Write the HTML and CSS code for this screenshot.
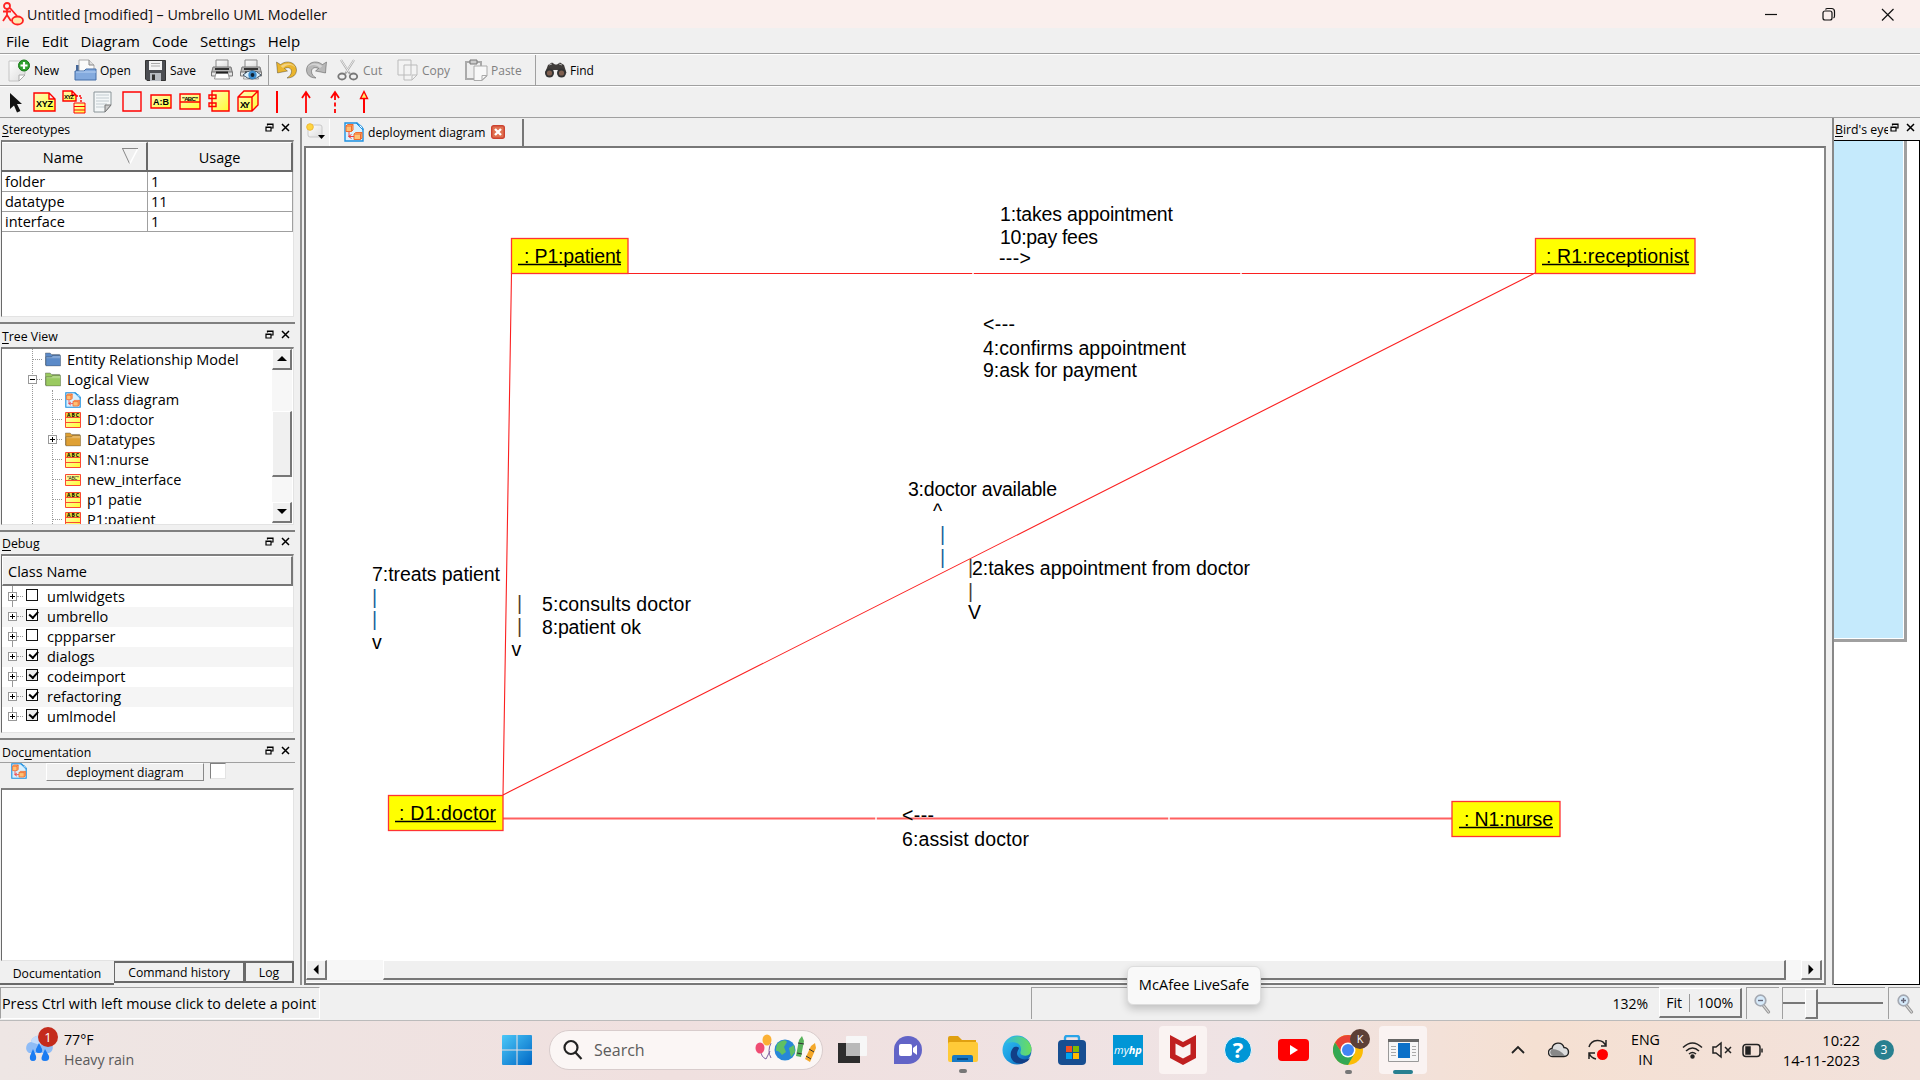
FILE: index.html
```html
<!DOCTYPE html>
<html lang="en">
<head>
<meta charset="utf-8">
<title>Untitled [modified] – Umbrello UML Modeller</title>
<link rel="stylesheet" href="styles.css">
</head>
<body>
<svg class="defs" width="0" height="0" aria-hidden="true">
  <defs>
    <linearGradient id="gy" x1="0" y1="0" x2="1" y2="1"><stop offset="0" stop-color="#fff9c0"/><stop offset="1" stop-color="#ffff30"/></linearGradient>
    <linearGradient id="gp" x1="0" y1="0" x2="1" y2="1"><stop offset="0" stop-color="#fff"/><stop offset="1" stop-color="#dcdcdc"/></linearGradient>
    <linearGradient id="gw" x1="0" y1="0" x2="1" y2="1"><stop offset="0" stop-color="#4cc8f8"/><stop offset="1" stop-color="#0067c5"/></linearGradient>
    <linearGradient id="ge" x1="0" y1="0" x2="1" y2="1"><stop offset="0" stop-color="#35c1f1"/><stop offset=".5" stop-color="#1b9de2"/><stop offset="1" stop-color="#0c4a9e"/></linearGradient>
    <linearGradient id="gg" x1="0" y1="0" x2="1" y2="0"><stop offset="0" stop-color="#2bb8e8"/><stop offset="1" stop-color="#6ade5b"/></linearGradient>
    <symbol id="diagram" viewBox="0 0 20 20">
      <path d="M1 1h12l6 6v12H1z" fill="#d8f0ff" stroke="#1e90e0" stroke-width="1.4"/>
      <path d="M12 1l7 7c0-3-2-5-4-5z" fill="#fff" stroke="#1e90e0"/>
      <path d="M2 4l1.500-1.500H9V8L7.500 9.500H2zM2 4h5.500v5.500M7.500 4L9 2.500M10 12l1.500-1.500H18V16l-1.500 1.500H10zM10 12h6.500v5.500M16.500 12l1.500-1.500" fill="#ffc074" stroke="#f06a30"/>
      <path d="M5 10v4.500h5M7.500 12.500l-3 2 3 2" fill="none" stroke="#f04040"/>
    </symbol>
    <symbol id="class" viewBox="0 0 16 16">
      <path d="M.5.500h15v15H.500z" fill="url(#gy)" stroke="#fa4a32"/>
      <path d="M1 1h14v4H1z" fill="#e6d73c"/><path d="M.500 5.500h15M.500 10.500h15" stroke="#fa4a32"/>
      <text x="8" y="4.700" font-size="5" textLength="12" font-weight="bold" text-anchor="middle">ABC</text>
    </symbol>
    <symbol id="folder" viewBox=".6 .8 16.800 15">
      <path d="M1 14V1.500h5l1.500 1.500H16V14z" fill="currentColor" stroke="#555" stroke-opacity=".45"/>
      <path d="M1.500 5.500H7L8.500 4H17v11H1.500z" fill="currentColor" stroke="#333" stroke-opacity=".35"/>
      <path d="M2 6h6l1-1.300h7.500V7H2z" fill="#fff" fill-opacity=".25"/>
    </symbol>
    <symbol id="float" viewBox="0 0 9 9"><path d="M2.500 2.500V1H8v4H6.500M2.500 1.500H8M1 4h5v4H1zM1 4.500h5" fill="none" stroke="#000" stroke-width="1.200"/></symbol>
    <symbol id="x" viewBox="0 0 9 9"><path d="M1 1l7 7M8 1L1 8" stroke="#000" stroke-width="1.500"/></symbol>
    <symbol id="printer" viewBox="0 0 22 22">
      <path d="M5 1h12v8H5z" fill="url(#gp)" stroke="#888"/><path d="M2 8h18l1.500 6H.500z" fill="#b8b8b8" stroke="#777"/>
      <path d="M.500 13h21v4H.500z" fill="#e4e4e4" stroke="#777"/><path d="M4 9h14v2H4z" fill="#333"/><path d="M5 14h12l1.500 6h-15z" fill="#fff" stroke="#999"/><path d="M5 13.500h12" stroke="#222" stroke-width="2"/>
    </symbol>
    <symbol id="undo" viewBox="0 0 22 20">
      <path d="M1 2l1 11 10-2-3-2.500c4-2 7 0 7 3 0 2.500-2 5-4.500 6.500C17 18 21 15 21 10 21 3 12-1 5 4.500z" fill="currentColor" stroke="#000" stroke-opacity=".3"/>
      <path d="M2 3.500l3 2.500C11 2 18 3 20 8 17 4 11 4 7.500 8z" fill="#fff" fill-opacity=".4"/>
    </symbol>
    <symbol id="lens" viewBox="0 0 18 20">
      <path d="M9 11l5.500 7" stroke="#999" stroke-width="3.200" stroke-linecap="round"/><path d="M9 11l5.500 7" stroke="#ddd" stroke-width="1.200" stroke-linecap="round"/>
      <circle cx="6.500" cy="6.500" r="5.300" fill="#d6eafa" stroke="#a4a9b2" stroke-width="1.700"/>
    </symbol>
  </defs>
</svg>
<div class="app">
  <header class="titlebar">
    <svg class="logo" width="22" height="24" viewBox="0 0 22 24" fill="none" stroke="#f22" stroke-width="1.800"><circle cx="5" cy="4" r="3"/><path d="M5 7v7M1 9.500h8M5 13l-4 6M5 13l4 6M8 6l7 8"/><ellipse cx="15.500" cy="18.500" rx="5.500" ry="4" fill="#ffe9b0"/></svg>
    <span class="title">Untitled [modified] – Umbrello UML Modeller</span>
    <svg class="winbtns" width="132" height="14" viewBox="0 0 132 14" fill="none" stroke="#111" stroke-width="1.200"><path d="M0 7.500h12"/><rect x="58" y="4" width="9" height="9" rx="2"/><path d="M60.500 2.500q.500-1 2-1h4q3 0 3 3v4.500q0 1.500-1 2"/><path d="M117 2l11.500 11.500M128.500 2L117 13.500"/></svg>
  </header>
  <nav class="menubar"><span>File</span><span>Edit</span><span>Diagram</span><span>Code</span><span>Settings</span><span>Help</span></nav>

  <div class="toolbar">
    <span class="tool t-new"><svg width="23" height="23" viewBox="0 0 23 23"><path d="M1 2h16v13l-6 7H1z" fill="url(#gp)" stroke="#c4c4c4"/><path d="M11 22v-6h6z" fill="#fff" stroke="#aaa"/><circle cx="16" cy="6.500" r="5.500" fill="#2ca02c" stroke="#187818"/><path d="M16 3v7M12.500 6.500h7" stroke="#fff" stroke-width="2.200"/></svg>New</span>
    <span class="tool t-open"><svg width="23" height="23" viewBox="0 0 23 23"><path d="M2 6h5v-4h9l4 4v12H2z" fill="#46689a"/><path d="M5 1h10l5 5v9H5z" fill="#fafafa" stroke="#aaa"/><path d="M15 1v5h5" fill="#ddd" stroke="#888"/><path d="M1 12h9l2-2h10v11H1z" fill="#83aade" stroke="#456fa8"/><path d="M2 13h20" stroke="#b8d2f4"/></svg>Open</span>
    <span class="tool t-save"><svg width="21" height="21" viewBox="0 0 21 21"><path d="M.500.500h20v20H2l-1.500-1.500z" fill="#4b4d52" stroke="#333"/><path d="M4 1h13v9H4z" fill="#f4f4f4"/><path d="M6 3.500h9M6 6h9" stroke="#aaa"/><path d="M5 13h11v8H5z" fill="#b8bcc2"/><path d="M7 14.500h3V20H7z" fill="#333"/></svg>Save</span>
    <svg class="t-print" width="22" height="22"><use href="#printer"/></svg>
    <svg class="t-preview" width="23" height="22" viewBox="0 0 23 22"><use href="#printer" width="22" height="22"/><path d="M3 16q9-9 18 0-9 8-18 0z" fill="#d8eefc" stroke="#456"/><circle cx="12.500" cy="16" r="4.200" fill="#3b8ccc"/><circle cx="12.500" cy="16" r="1.900" fill="#123"/></svg>
    <i class="sep"></i>
    <svg class="t-undo" width="23" height="20"><use href="#undo"/></svg>
    <svg class="t-redo" width="23" height="20"><use href="#undo"/></svg>
    <span class="tool off t-cut"><svg width="22" height="22" viewBox="0 0 22 22" fill="none" stroke="#999"><path d="M4 1l9 14M17 1L8 15" stroke="#aaa" stroke-width="2.200"/><path d="M4 1l8 12M17 1L9 13" stroke="#eee"/><ellipse cx="5" cy="17.500" rx="3.700" ry="3" stroke="#777" stroke-width="1.800"/><ellipse cx="16.500" cy="17.500" rx="3.700" ry="3" stroke="#777" stroke-width="1.800"/></svg>Cut</span>
    <span class="tool off t-copy"><svg width="21" height="22" viewBox="0 0 21 22" fill="#f3f3f3" stroke="#bbb"><path d="M1 1h13v15H1zM7 6h13v10l-5 5H7zM15 21v-5h5z"/></svg>Copy</span>
    <span class="tool off t-paste"><svg width="23" height="22" viewBox="0 0 23 22" fill="#eee" stroke="#aaa"><path d="M1 3h15v17H1z" stroke-width="2"/><path d="M5 1h7v4H5z" fill="#ccc" stroke="#777"/><path d="M9 7h13v10l-5 4.500H9zM17 21v-4.500h5z" fill="#f8f8f8"/></svg>Paste</span>
    <i class="sep s2"></i>
    <span class="tool t-find"><svg width="23" height="16" viewBox="0 0 23 16"><path d="M4 3l4-2.500 3 2h2l3-2L20 3l2.500 8-5 2-4-5h-4L6 13l-5-2z" fill="#403c3a"/><circle cx="5.500" cy="11" r="4.500" fill="#333"/><circle cx="17.500" cy="11" r="4.500" fill="#333"/><circle cx="5.500" cy="11" r="2.600" fill="#806050"/><circle cx="17.500" cy="11" r="2.600" fill="#806050"/><path d="M5 3l3-1M15 2l3 1" stroke="#aaa"/></svg>Find</span>
  </div>

  <div class="toolbar tools">
    <svg width="400" height="26" viewBox="0 0 400 26" fill="none" stroke="#f00" stroke-width="1.400">
      <path d="M10 4v16l4-3.500 3 7 3.500-1.500-3.500-7h5z" fill="#111" stroke="none"/>
      <path d="M34 4h15l6 6v12H34zM49 4v6h6" fill="url(#gy)"/><text class="ic" x="36" y="18" textLength="17">XYZ</text>
      <path d="M63 2h9l4 4v6H63zM72 2v4h4" fill="url(#gy)"/><text class="ic s" x="64" y="10" textLength="10">XYZ</text><path d="M76 7h5v6" stroke-dasharray="2 1"/><path d="M74 14h11v10H74zM74 17.500h11M74 21h11" fill="url(#gy)" stroke-width="1"/>
      <path d="M94 3h17v13l-6 7H94z" fill="#f4f7f8" stroke="#8a9498" stroke-width="1"/><path d="M96 6h13M96 9h13M96 12h13M96 15h11M96 18h9" stroke="#c2cbd0" stroke-width="1"/><path d="M105 23v-7h6z" fill="#ccc" stroke="#777" stroke-width="1"/>
      <path d="M123 3h18v19h-18z"/>
      <path d="M151 6h20v13h-20z" fill="url(#gy)"/><text class="ic" x="153" y="16" textLength="16">A:B</text>
      <path d="M180 5h20v15h-20zM180 13h20" fill="url(#gy)"/><text class="ic s" x="182" y="11.500" textLength="16">"ABC"</text>
      <path d="M212 2h17v20h-17zM209 6h7v3.500h-7zM209 14h7v3.500h-7z" fill="url(#gy)"/>
      <path d="M238 8l6-6h14v14l-6 6h-14zM238 8h14v14M252 8l6-6" fill="url(#gy)"/><text class="ic" x="240" y="19" textLength="10">XY</text>
      <path d="M277 2v22" stroke-width="2"/><path d="M306 24V3M302 9l4-6 4 6" stroke-width="1.800"/><path d="M335 24v-4m0-2.500v-4m0-2.500V3M331 9l4-6 4 6" stroke-width="1.800"/><path d="M364 24V9" stroke-width="2"/><path d="M360.500 9.500l3.500-7 3.500 7z" fill="#fff070"/>
    </svg>
  </div>

  <main class="workspace">
    <aside class="docks">
      <section class="dock stereo">
        <h2><span><u>S</u>tereotypes</span><b><svg width="9" height="9"><use href="#float"/></svg><svg width="9" height="9"><use href="#x"/></svg></b></h2>
        <div class="well">
          <div class="grid head"><span>Name<svg class="sort" width="16" height="16" viewBox="0 0 16 16" fill="none"><path d="M0 .500h16M.500.500l7 15" stroke="#888"/><path d="M15.500 1L8 15.500" stroke="#fff" stroke-width="1.500"/></svg></span><span>Usage</span></div>
          <div class="grid"><span>folder</span><span>1</span></div>
          <div class="grid"><span>datatype</span><span>11</span></div>
          <div class="grid"><span>interface</span><span>1</span></div>
        </div>
      </section>
      <section class="dock tree">
        <h2><span><u>T</u>ree View</span><b><svg width="9" height="9"><use href="#float"/></svg><svg width="9" height="9"><use href="#x"/></svg></b></h2>
        <div class="well split">
          <div class="nodes">
            <div class="node l1"><svg class="blue" width="16" height="15"><use href="#folder"/></svg>Entity Relationship Model</div>
            <div class="node l1"><i class="exp minus"></i><svg class="green" width="16" height="15"><use href="#folder"/></svg>Logical View</div>
            <div class="sub">
            <div class="node l2"><svg width="16" height="16"><use href="#diagram"/></svg>class diagram</div>
            <div class="node l2"><svg width="16" height="16"><use href="#class"/></svg>D1:doctor</div>
            <div class="node l2"><i class="exp"></i><svg class="gold" width="16" height="15"><use href="#folder"/></svg>Datatypes</div>
            <div class="node l2"><svg width="16" height="16"><use href="#class"/></svg>N1:nurse</div>
            <div class="node l2"><svg width="16" height="12" viewBox="0 0 16 12"><path d="M.500.500h15v11H.500zM.500 6.500h15" fill="url(#gy)" stroke="#fa4a32"/><text x="8" y="5.500" font-size="5" textLength="12" text-anchor="middle">"ABC"</text></svg>new_interface</div>
            <div class="node l2"><svg width="16" height="16"><use href="#class"/></svg>p1 patie</div>
            <div class="node l2"><svg width="16" height="16"><use href="#class"/></svg>P1:patient</div>
            </div>
          </div>
          <div class="vscroll"><i class="btn up"></i><i class="btn thumb"></i><i class="btn down"></i></div>
        </div>
      </section>
      <section class="dock debug">
        <h2><span><u>D</u>ebug</span><b><svg width="9" height="9"><use href="#float"/></svg><svg width="9" height="9"><use href="#x"/></svg></b></h2>
        <div class="well">
          <div class="classhead">Class Name</div>
          <div class="checks">
            <div><i class="exp"></i><i class="box"></i>umlwidgets</div>
            <div><i class="exp"></i><i class="box on"></i>umbrello</div>
            <div><i class="exp"></i><i class="box"></i>cppparser</div>
            <div><i class="exp"></i><i class="box on"></i>dialogs</div>
            <div><i class="exp"></i><i class="box on g"></i>codeimport</div>
            <div><i class="exp"></i><i class="box on"></i>refactoring</div>
            <div><i class="exp"></i><i class="box on g"></i>umlmodel</div>
          </div>
        </div>
      </section>
      <section class="dock doc">
        <h2><span>Doc<u>u</u>mentation</span><b><svg width="9" height="9"><use href="#float"/></svg><svg width="9" height="9"><use href="#x"/></svg></b></h2>
        <div class="docrow"><svg width="16" height="16"><use href="#diagram"/></svg><span class="docbtn">deployment diagram</span><i class="check"></i></div>
        <div class="well"></div>
      </section>
      <div class="tabs"><span class="active">Documentation</span><span>Command history</span><span>Log</span></div>
    </aside>

    <section class="center">
      <div class="tabbar">
        <svg width="20" height="18" viewBox="0 0 20 18"><path d="M4 2h10q2 0 2 2v10H4q-2 0-2-2V4z" fill="url(#gp)" stroke="#c8c8c8"/><circle cx="4" cy="4" r="3.300" fill="#ffd53e" stroke="#edb93a"/><path d="M12 12h7l-3.500 4z"/></svg>
        <div class="doctab"><svg width="20" height="20"><use href="#diagram"/></svg><span>deployment diagram</span><svg width="14" height="14" viewBox="0 0 14 14"><rect x=".700" y=".700" width="12.600" height="12.600" rx="2" fill="#e07050" stroke="#cc4230" stroke-width="1.400"/><path d="M4 4l6 6M10 4l-6 6" stroke="#fff" stroke-width="2.400"/></svg></div>
      </div>
      <div class="frame">
        <svg class="canvas" width="1518" height="812" viewBox="306 148 1518 812">
          <g class="links"><path d="M511 273.500H1535M511.500 273L503 795M1535 273L503 795"/><path class="thick" d="M503 818.500H1452"/></g>
          <g class="gaps"><path d="M973 273v1.500M1241 273v1.500M876 817v3M1169 817v3"/></g>
          <g class="objs"><rect x="511.500" y="238.500" width="116.500" height="35"/><rect x="1535.500" y="238.500" width="159.500" height="35"/><rect x="388.500" y="795.500" width="114.500" height="35"/><rect x="1452" y="801.500" width="108" height="35"/></g>
          <g class="ul"><path d="M518 264.500h103M1542 264.500h147M395 821.500h101M1459 827.500h94"/></g>
          <g class="txt">
            <text x="524" y="263" textLength="97">: P1:patient</text>
            <text x="1546" y="263" textLength="143">: R1:receptionist</text>
            <text x="399" y="820" textLength="97">: D1:doctor</text>
            <text x="1464" y="826" textLength="89">: N1:nurse</text>
            <text x="1000" y="221" textLength="173">1:takes appointment</text>
            <text x="1000" y="244" textLength="98">10:pay fees</text>
            <text x="999" y="265" textLength="32">---&gt;</text>
            <text x="983" y="331" textLength="32">&lt;---</text>
            <text x="983" y="355" textLength="203">4:confirms appointment</text>
            <text x="983" y="377" textLength="154">9:ask for payment</text>
            <text x="908" y="496" textLength="149">3:doctor available</text>
            <text x="933" y="518">^</text>
            <text class="bl" x="940" y="541">|</text><text class="bl" x="940" y="564">|</text>
            <text x="972" y="575" textLength="278">2:takes appointment from doctor</text>
            <text class="br" x="968" y="574">|</text><text class="br" x="968" y="598">|</text>
            <text x="968" y="619">V</text>
            <text x="372" y="581" textLength="128">7:treats patient</text>
            <text class="bl" x="372" y="604">|</text><text class="bl" x="372" y="626">|</text>
            <text x="372" y="649">v</text>
            <text class="br" x="517" y="610">|</text><text class="br" x="517" y="633">|</text>
            <text x="511.500" y="656">v</text>
            <text x="542" y="611" textLength="149">5:consults doctor</text>
            <text x="542" y="634" textLength="99">8:patient ok</text>
            <text x="902" y="822" textLength="32">&lt;---</text>
            <text x="902" y="846" textLength="127">6:assist doctor</text>
          </g>
        </svg>
        <div class="hscroll"><i class="btn left"></i><i class="btn thumb"></i><i class="btn right"></i></div>
      </div>
    </section>

    <aside class="bird">
      <h2><span><u>B</u>ird's eye</span><b><svg width="9" height="9"><use href="#float"/></svg><svg width="9" height="9"><use href="#x"/></svg></b></h2>
      <div class="map"><div class="view"></div></div>
    </aside>
  </main>

  <div class="status">
    <span class="msg">Press Ctrl with left mouse click to delete a point</span>
    <div class="zoombox"><span>132%</span></div>
    <div class="fit"><span>Fit</span><span>100%</span></div>
    <div class="cell zo"><svg width="18" height="20"><use href="#lens"/><path d="M4 6.500h5" stroke="#667" stroke-width="1.400"/></svg></div>
    <div class="cell slider"><i></i></div>
    <div class="cell zi"><svg width="18" height="20"><use href="#lens"/><path d="M4 6.500h5M6.500 4v5" stroke="#667" stroke-width="1.400"/></svg></div>
  </div>

  <footer class="taskbar">
    <div class="weather">
      <svg width="36" height="40" viewBox="0 0 36 40"><path d="M6 26a6 6 0 0 1 2-11c1-7 12-9 15-1 8 0 9 10 3 12z" fill="#8fbcf6"/><path d="M8 15c1-7 12-9 15-1l-6 4z" fill="#c4dcfb"/><path d="M10 22l3 7q1 5-3 5t-3-5zM22 22l4 7q1 5-4 5t-3-5zM16 16l3 6q1 4-3 4t-3-4z" fill="#1c7cf2"/><circle cx="25" cy="10" r="10" fill="#c42b1c"/><text x="25" y="15" text-anchor="middle" font-size="13" fill="#fff">1</text></svg>
      <p>77°F<br><span>Heavy rain</span></p>
    </div>
    <svg class="start" width="30" height="30" viewBox="0 0 30 30" fill="url(#gw)"><path d="M0 1q0-1 1-1h13.500v14.500H0zM15.500 0H29q1 0 1 1v13.500H15.500zM0 15.500h14.500V30H1q-1 0-1-1zM15.500 15.500H30V29q0 1-1 1H15.500z"/></svg>
    <div class="search">
      <svg width="20" height="22" viewBox="0 0 20 22" fill="none" stroke="#222" stroke-width="2.200"><circle cx="8" cy="8.500" r="6.500"/><path d="M12.500 13.500l6 6.500"/></svg><span>Search</span>
      <svg class="decor" width="62" height="32" viewBox="0 0 62 32"><path d="M6 17q0 6 5 8l4-8M16 9q-4 8 0 15" fill="none" stroke="#8060a0"/><ellipse cx="5" cy="14" rx="4.500" ry="5.500" fill="#ef4c73"/><ellipse cx="12" cy="6" rx="4.500" ry="5.500" fill="#fbb034"/><circle cx="30" cy="16" r="10.500" fill="#2787d8"/><path d="M23 9q7-5 9-1l-3 5 2 5-4 3q-4-5-6-4 0-6 2-8zM34 14l5-3 1 7-4 5z" fill="#5fc064"/><path d="M41 22l3-16 3-4 2 5-3 16z" fill="#58b25c"/><path d="M50 25l6-13 4-3 1 5-6 14z" fill="#f4a72a"/><path d="M43 9l6 1M42 19l5 1M54 15l5 3M51 22l5 3" stroke="#333"/></svg>
    </div>
    <svg class="tv" width="30" height="30" viewBox="0 0 30 30"><path d="M0 8h22v20H0z" fill="#2d2d2d"/><path d="M8 2q0-1 1-1h19q1 0 1 1v18q0 1-1 1H8z" fill="#f7f7f7"/><path d="M8 8h14v13H8z" fill="#b9b9b9"/></svg>
    <svg class="chat" width="30" height="30" viewBox="0 0 30 30"><path d="M1 29V15A14 14 0 1 1 15 29z" fill="#6264c7"/><rect x="6" y="9" width="13" height="12" rx="2" fill="#fff"/><path d="M20 13l4-3v10l-4-3z" fill="#fff"/></svg>
    <svg class="files" width="32" height="44" viewBox="0 0 32 44"><path d="M1 3q0-2 2-2h8l4 4h14v6H1z" fill="#e0a010"/><path d="M1 9q0-2 2-2h26q2 0 2 2v16q0 2-2 2H3q-2 0-2-2z" fill="#ffca38"/><path d="M5 27v-5q0-2 2-2h17q2 0 2 2v5z" fill="#1879c4"/><path d="M10 24h11" stroke="#0a4a84" stroke-width="2"/><rect x="12" y="34" width="8" height="4" rx="2" fill="#777"/></svg>
    <svg class="edge" width="31" height="30" viewBox="0 0 31 30"><circle cx="15" cy="15" r="14.500" fill="url(#ge)"/><path d="M2 9.500C8-2 25-2 29.300 12c1 8-4.300 10-9.300 8-3-2-1-3-1-6 0-8-12-8-17-4.500z" fill="url(#gg)"/><path d="M11 13c-6 8 0 18 11 15 3-1 5-3 6-5-5 3-12 1-13-4 0-3 2-5 2-6-2-2-5-1-6 0z" fill="#123f87"/></svg>
    <svg class="store" width="30" height="30" viewBox="0 0 30 30"><path d="M8 8V3q0-2 2-2h10q2 0 2 2v5" fill="none" stroke="#2aa4e8" stroke-width="2.400"/><rect x="1" y="5" width="28" height="25" rx="4" fill="#174e91"/><path d="M9 11h6v6H9z" fill="#f25022"/><path d="M16 11h6v6h-6z" fill="#7fba00"/><path d="M9 18h6v6H9z" fill="#00a4ef"/><path d="M16 18h6v6h-6z" fill="#ffb900"/></svg>
    <div class="hp">my<b>hp</b></div>
    <div class="tile mc"><svg width="28" height="30" viewBox="0 0 28 30"><path d="M1 0l13 7L27 0v23l-13 7-13-7zM6.500 8.500v11L14 23.500l7.500-4v-11L14 12.500z" fill="#c02020" fill-rule="evenodd"/></svg></div>
    <svg class="help" width="28" height="30" viewBox="0 0 28 30"><circle cx="14" cy="15" r="13.500" fill="#0096d6" stroke="#eef8fc"/><text x="14" y="23" text-anchor="middle" font-size="22" font-weight="bold" fill="#fff">?</text></svg>
    <svg class="yt" width="31" height="22" viewBox="0 0 31 22"><rect width="31" height="22" rx="4" fill="#f00"/><path d="M12 6v10l8-5z" fill="#fff"/></svg>
    <svg class="chrome" width="38" height="50" viewBox="0 0 38 50"><circle cx="15" cy="25" r="15" fill="#fbbc05"/><path d="M2 17.500A15 15 0 0 1 28 17.500L15 18 9 28z" fill="#e94235"/><path d="M2 17.500A15 15 0 0 0 15 40l6.500-11.500L9 28z" fill="#34a853"/><circle cx="15" cy="25" r="7.500" fill="#fff"/><circle cx="15" cy="25" r="6" fill="#4285f4"/><circle cx="27" cy="14" r="10" fill="#5d4037"/><text x="27" y="18" font-size="11" text-anchor="middle" fill="#fff">K</text><rect x="12" y="45" width="7" height="4" rx="2" fill="#777"/></svg>
    <div class="tile app-open"><svg width="31" height="23" viewBox="0 0 31 23"><path d="M.500.500h30v22H.500z" fill="#f6f6f6" stroke="#999"/><path d="M0 0h31v3H0z" fill="#666"/><path d="M10 4h12v15H10z" fill="#0b70c8"/><path d="M3 7.500h5M3 10.500h5M3 13.500h5M3 16.500h5M24 7.500h4M24 10.500h4M24 13.500h4M24 16.500h4" stroke="#aaa"/></svg></div>
    <svg class="chev" width="14" height="10" viewBox="0 0 14 10"><path d="M1 8l6-6 6 6" fill="none" stroke="#222" stroke-width="1.800"/></svg>
    <svg class="cloud" width="22" height="16" viewBox="0 0 22 16"><path d="M5 14.500a4 4 0 0 1-1-8C5 0 14-1 16 5.500c6 0 6 9 0 9z" fill="#ddd" stroke="#222" stroke-width="1.400"/><path d="M5 14q-5-3-1-7 8 0 13 7z" fill="#888"/></svg>
    <svg class="sync" width="22" height="22" viewBox="0 0 22 22" fill="none" stroke="#222" stroke-width="1.500"><path d="M2 8A9 9 0 0 1 19 7M19 1v6h-5M2 14q2 5 7 6M2 20v-6h6"/><circle cx="15.500" cy="15.500" r="5.500" fill="#f00" stroke="none"/></svg>
    <p class="lang">ENG<br>IN</p>
    <svg class="wifi" width="82" height="20" viewBox="0 0 82 20" fill="none" stroke="#222" stroke-width="1.500"><path d="M1 7.500q9.500-9 19 0M4 11q6.500-6 13 0M7 14q3.500-3 7 0"/><circle cx="10.500" cy="16.500" r="1.500" fill="#222"/><path d="M31 7h3l5-4v14l-5-4h-3zM43 7l6 6M49 7l-6 6"/><rect x="61" y="4.500" width="17" height="12" rx="3"/><path d="M80 8.500v4"/><path d="M64 7h4v7h-4z" fill="#222"/></svg>
    <p class="clock">10:22<br>14-11-2023</p>
    <div class="badge">3</div>
    <div class="tip">McAfee LiveSafe</div>
  </footer>
</div>
</body>
</html>
```
FILE: styles.css
```css
* { box-sizing: border-box; }
body { margin: 0; background: #f0f0f0; color: #000; font: 14.5px "Open Sans", "Noto Sans", sans-serif; overflow: hidden; }
p, h2 { margin: 0; }
svg { display: block; flex: none; }
.defs { position: absolute; }
.app { display: flex; flex-direction: column; width: 1920px; height: 1080px; }

.titlebar { display: flex; align-items: center; height: 28px; background: #faefed; padding: 0 23px 0 2px; }
.title { margin-left: 3px; font-size: 14.3px; color: #111; white-space: nowrap; }
.winbtns { margin-left: auto; }
.menubar { display: flex; gap: 12px; align-items: center; height: 26px; padding: 1px 0 0 6px; border-bottom: 1px solid #a0a0a0; font-size: 15px; }

.toolbar { display: flex; align-items: center; height: 32px; border-top: 1px solid #fff; border-bottom: 1px solid #a0a0a0; padding-left: 8px; font-size: 12px; }
.tool { display: flex; align-items: center; gap: 3px; white-space: nowrap; }
.off { color: #808080; }
.t-new { width: 66px; }
.t-open { width: 71px; }
.t-save { width: 66px; gap: 4px; }
.t-preview { margin-left: 7px; }
.sep { width: 1px; height: 30px; background: #a0a0a0; margin: 0 6px 0 5px; }
.t-undo { color: #eab52e; }
.t-redo { color: #b8b8b8; margin: 0 9px 0 7px; transform: scaleX(-1); }
.t-cut { width: 60px; gap: 4px; }
.t-copy { width: 68px; gap: 4px; }
.t-paste { width: 64px; }
.s2 { margin: 0 8px 0 6px; }
.tools { padding: 0; }
.ic { font: bold 9px "Liberation Sans", sans-serif; fill: #000; stroke: none; }
.ic.s { font-size: 6px; }

.workspace { display: flex; height: 867px; }
.docks { width: 295px; display: flex; flex-direction: column; }
h2 { display: flex; justify-content: space-between; align-items: center; height: 21px; padding: 0 5px 0 2px; font-size: 12.3px; font-weight: normal; white-space: nowrap; }
h2 b { display: flex; gap: 7px; margin-top: -4px; }
u { text-underline-offset: 2px; }
.well { flex: 1; min-height: 0; margin: 0 1px 0 1px; overflow: hidden; background: #fff; border: 1px solid #696969; border-top: 2px solid #808080; border-right-color: #e3e3e3; border-bottom-color: #e3e3e3; }
.dock { display: flex; flex-direction: column; border-bottom: 2px solid #808080; }
.dock .well { margin-bottom: 5px; }
.stereo { height: 206px; padding-top: 1px; }
.tree { height: 208px; padding-top: 2px; }
.debug { height: 209px; padding-top: 1px; }
.doc { height: 221px; padding-top: 2px; border: 0; }
.grid { display: grid; grid-template-columns: 146px 145px; width: 291px; }
.grid span { height: 20px; line-height: 19px; padding-left: 3px; border-right: 1px solid #a0a0a0; border-bottom: 1px solid #a0a0a0; }
.grid.head span { height: 30px; line-height: 29px; padding: 0; text-align: center; background: #f0f0f0; border-top: 1px solid #fff; border-right: 2px solid #696969; border-bottom: 2px solid #696969; }
.grid.head span:first-child { display: flex; justify-content: center; gap: 39px; padding-left: 33px; }
.sort { margin-top: 5px; }
.split { display: flex; }
.nodes { flex: 1; padding-top: 1px; margin-left: 30px; border-left: 1px dotted #999; }
.node { display: flex; align-items: center; height: 20px; gap: 6px; white-space: nowrap; position: relative; }
.node::before { content: ""; width: 9px; margin-right: -3px; border-top: 1px dotted #999; }
.sub { margin-left: 19px; border-left: 1px dotted #999; }
.nodes .exp { position: absolute; left: -5px; }
.exp { width: 9px; height: 9px; background: linear-gradient(#000, #000) 50% 50% / 5px 1px no-repeat, linear-gradient(#000, #000) 50% 50% / 1px 5px no-repeat, #fff; border: 1px solid #999; flex: none; }
.exp.minus { background: linear-gradient(#000, #000) 50% 50% / 5px 1px no-repeat, #fff; }
.blue { color: #5b8ac8; } .green { color: #9aca60; } .gold { color: #dfa034; }
.btn { display: block; background: #f0f0f0; border: 1px solid #fff; border-right: 2px solid #777; border-bottom: 2px solid #777; flex: none; }
.vscroll { width: 20px; margin-right: 1px; display: flex; flex-direction: column; background: #f7f7f7; }
.vscroll .btn { height: 21px; }
.vscroll .thumb { height: 66px; margin: 41px 0 25px; }
.up, .down, .left, .right { display: grid; place-items: center; }
.up::after, .down::after, .left::after, .right::after { content: ""; border: 5px solid transparent; border-top-width: 0; border-bottom-color: #000; }
.down::after { transform: rotate(180deg); }
.left::after { transform: rotate(-90deg); }
.right::after { transform: rotate(90deg); }

.classhead { height: 30px; line-height: 29px; padding-left: 5px; background: #f0f0f0; border: 1px solid #fff; border-right: 2px solid #777; border-bottom: 2px solid #777; }
.checks { padding-top: 1px; background: linear-gradient(#999, #999) 10px 0 / 1px 134px no-repeat; }
.checks div { display: flex; align-items: center; height: 20px; padding-left: 6px; }
.checks div:nth-child(even) { background: #f5f5f5; }
.checks .exp::after { content: ""; display: block; width: 6px; margin: 3px 0 0 8px; border-top: 1px dotted #999; }
.box { width: 12px; height: 12px; border: 1.5px solid #111; background: #fff; margin: -3px 9px 0 9px; position: relative; }
.box.g { background: #eee; }
.box.on::after { content: ""; position: absolute; left: 1.5px; top: 1px; width: 7px; height: 3.5px; border: solid #000; border-width: 0 0 2px 2px; transform: rotate(-48deg); }
.doc h2 { border-bottom: 1px solid #a0a0a0; height: 21px; }
.docrow { display: flex; height: 25px; padding-left: 11px; }
.docbtn { width: 158px; height: 18px; margin: 0 6px 0 19px; line-height: 17px; text-align: center; font-size: 12.1px; border: 1px solid #fff; border-right-color: #888; border-bottom-color: #888; }
.check { width: 16px; height: 16px; background: #fff; border: 1px solid #808080; border-right-color: #e3e3e3; border-bottom-color: #e3e3e3; }
.doc .well { margin-bottom: 0; }
.tabs { display: flex; height: 24px; font-size: 12.2px; line-height: 20px; }
.tabs span { height: 22px; text-align: center; border: 1px solid #696969; border-width: 2px 2px 2px 1px; width: 131px; }
.tabs span.active { width: 114px; height: 24px; line-height: 25px; border-width: 0 0 2px; }
.tabs span:last-child { width: 49px; }

.center { width: 1528px; margin-left: 5px; border-left: 2px solid #909090; display: flex; flex-direction: column; }
.tabbar { display: flex; align-items: center; height: 28px; padding-left: 4px; }
.doctab { display: flex; align-items: center; width: 195px; height: 27px; margin-left: 3px; padding-left: 14px; border-left: 1px solid #fff; border-right: 2px solid #777; font-size: 12.1px; }
.doctab span { width: 117px; margin: 0 6px 0 4px; white-space: nowrap; }
.frame { flex: 1; width: 1522px; margin-left: 2px; border: 2px solid #777; border-right-color: #888; background: #fff; display: flex; flex-direction: column; }
.canvas { display: block; }
.hscroll { display: flex; height: 22px; background: #f7f7f7; border-bottom: 2px solid #f0f0f0; }
.hscroll .btn { width: 21px; }
.hscroll .thumb { width: 1403px; margin: 0 15px 0 56px; }
.links { fill: none; stroke: #fb2020; stroke-width: 1.1; }
.thick { stroke: #ff6060; stroke-width: 2; }
.gaps { stroke: #fff; stroke-width: 1.5; }
.objs { fill: #ff0; stroke: #f33; stroke-width: 1.3; }
.ul { stroke: #000; stroke-width: 1.3; }
.txt { font: 19.5px "Liberation Sans", Arial, sans-serif; }
.bl { fill: #17629a; } .br { fill: #4c4032; }

.bird { width: 88px; margin-left: 4px; border-left: 2px solid #888; display: flex; flex-direction: column; padding-top: 1px; }
.bird h2 { padding-left: 1px; }
.bird h2 span { width: 53px; overflow: hidden; }
.map { flex: 1; border: 1px solid #000; border-left: 0; background: #fff; }
.view { width: 73px; height: 501px; background: #c5eafc; border: solid #a0a0a0; border-width: 0 3px 3px 0; box-shadow: inset -1px -1px #fff; }

.status { display: flex; height: 35px; padding: 2px 0 1px; }
.msg { width: 320px; line-height: 31px; padding-left: 1px; font-size: 14.3px; letter-spacing: -.02px; white-space: nowrap; border: 1px solid #a0a0a0; border-right-color: #fff; border-bottom-color: #fff; }
.zoombox { width: 629px; margin-left: 711px; border: solid #a0a0a0; border-width: 1px 0 0 1px; text-align: right; padding-right: 11px; line-height: 32px; font-size: 14px; }
.fit { display: flex; align-items: center; width: 83px; height: 30px; margin-top: 1px; font-size: 14.2px; border: 1px solid #fff; border-right: 2px solid #777; border-bottom: 2px solid #777; }
.fit span { padding: 0 7px 0 6px; line-height: 18px; }
.fit span + span { border-left: 1px solid #999; padding: 0 0 0 7px; }
.cell { border: solid #a0a0a0; border-width: 1px 0 0 1px; display: flex; align-items: center; }
.zo { width: 33px; margin-left: 4px; padding-left: 7px; }
.slider { width: 103px; margin-left: 3px; background: linear-gradient(#777, #777) 0 14px / 100px 2px no-repeat; }
.slider i { width: 13px; height: 30px; margin-left: 22px; background: #f0f0f0; border: 1px solid #fff; border-right: 2px solid #777; border-bottom: 2px solid #777; }
.zi { margin-left: 3px; width: 32px; padding-left: 8px; }

.taskbar { position: relative; display: flex; align-items: center; height: 60px; border-top: 1px solid #bbb; padding-bottom: 1px; background: linear-gradient(90deg, #eee6e4, #f0e0df 35%, #efe3e4 65%, #f5e0d2 80%, #f2e2dc); line-height: 20px; font-size: 14.2px; }
.taskbar > * { flex: none; }
.weather { display: flex; align-items: center; width: 502px; padding-left: 23px; }
.weather p { margin-left: 5px; } .weather p span { color: #5a5a5a; }
.weather svg { margin-top: -6px; }
.search { display: flex; align-items: center; width: 274px; height: 40px; margin: 0 15px 0 17px; padding: 0 5px 0 13px; border: 1px solid #d8cccc; border-radius: 20px; background: #fbf6f5; font-size: 16px; color: #5c5c5c; }
.search span { margin-left: 11px; }
.decor { margin-left: auto; }
.chat { margin: 0 24px 0 25px; }
.files { margin: 14px 23px 0 0; }
.store { margin: 0 26px 0 24px; }
.hp { width: 30px; height: 30px; background: #0096d6; color: #fff; font: italic 11px/30px "Open Sans", sans-serif; text-align: center; }
.tile { display: grid; place-items: center; width: 48px; height: 48px; background: #faf3f2; border-radius: 4px; }
.mc { margin: 0 17px 0 16px; }
.yt { margin: 0 24px 0 26px; }
.chrome { margin-right: 8px; }
.app-open { position: relative; }
.app-open::after { content: ""; position: absolute; left: 14px; bottom: 0; width: 20px; height: 4px; border-radius: 2px; background: #288090; }
.chev { margin-left: 84px; }
.cloud { margin: 0 17px 0 23px; }
.lang { width: 73px; text-align: center; }
.clock { width: 96px; text-align: right; font-size: 14.8px; }
.badge { width: 20px; height: 20px; margin-left: 14px; border-radius: 50%; background: #288090; color: #fff; font-size: 12px; text-align: center; }
.tip { position: absolute; left: 1127px; top: -55px; width: 134px; height: 39px; line-height: 35px; text-align: center; font-size: 14.6px; background: #f9f9f9; border: 1px solid #ddd; border-radius: 6px; box-shadow: 0 4px 8px #0003; }
```
